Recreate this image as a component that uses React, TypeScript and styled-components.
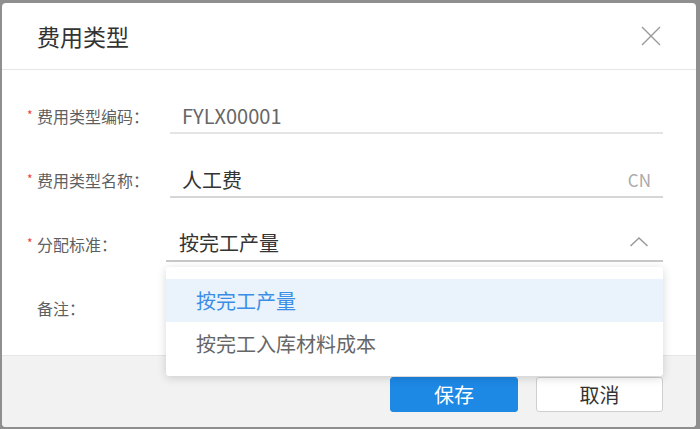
import React, { useState } from "react";
import styled, { createGlobalStyle } from "styled-components";

const GlobalStyle = createGlobalStyle`
  html, body {
    margin: 0;
    padding: 0;
    background: #8f8f8f;
    font-family: "Noto Sans CJK SC", "Noto Sans", sans-serif;
  }
`;

type Field = {
  label: string;
  required: boolean;
  value: string;
  disabled?: boolean;
  suffix?: string;
};

const fields: Field[] = [
  { label: "费用类型编码：", required: true, value: "FYLX00001", disabled: true },
  { label: "费用类型名称：", required: true, value: "人工费", suffix: "CN" },
];

const options = ["按完工产量", "按完工入库材料成本"];

const App = (): JSX.Element => {
  const [selected, setSelected] = useState(options[0]);

  return (
    <>
      <GlobalStyle />
      <Dialog>
        <Header>
          <Title>费用类型</Title>
          <CloseButton aria-label="关闭">
            <svg width="22" height="22" viewBox="0 0 22 22">
              <path d="M2 2 L20 20 M20 2 L2 20" stroke="#9a9a9a" strokeWidth="1.4" fill="none" />
            </svg>
          </CloseButton>
        </Header>
        <Body>
          {fields.map((f) => (
            <Row key={f.label}>
              <Label>
                <Star>{f.required ? "*" : ""}</Star>
                {f.label}
              </Label>
              <Input $disabled={f.disabled}>
                <Value $disabled={f.disabled}>{f.value}</Value>
                {f.suffix && <Suffix>{f.suffix}</Suffix>}
              </Input>
            </Row>
          ))}
          <Row>
            <Label>
              <Star>*</Star>
              分配标准：
            </Label>
            <SelectWrap>
              <Select>
                <SelectValue>{selected}</SelectValue>
                <svg width="20" height="12" viewBox="0 0 20 12">
                  <path d="M1.5 10 L10 2 L18.5 10" stroke="#9a9a9a" strokeWidth="1.5" fill="none" />
                </svg>
              </Select>
              <Menu>
                {options.map((o) => (
                  <MenuItem key={o} $active={o === selected} onClick={() => setSelected(o)}>
                    {o}
                  </MenuItem>
                ))}
              </Menu>
            </SelectWrap>
          </Row>
          <Row>
            <Label>
              <Star />
              备注：
            </Label>
            <Input />
          </Row>
        </Body>
        <Footer>
          <PrimaryButton>保存</PrimaryButton>
          <Button>取消</Button>
        </Footer>
      </Dialog>
    </>
  );
};

export default App;

const Dialog = styled.div`
  margin: 3px 4px 0 2px;
  height: 424px;
  background: #fff;
  border-radius: 4px;
  overflow: hidden;
  display: flex;
  flex-direction: column;
`;

const Header = styled.header`
  height: 67px;
  border-bottom: 1px solid #e6e6e6;
  display: flex;
  align-items: center;
  justify-content: space-between;
  padding: 0 34px 0 35px;
  box-sizing: border-box;
`;

const Title = styled.h1`
  margin: 0;
  font-size: 23px;
  font-weight: 400;
  color: #333;
  line-height: 1;
`;

const CloseButton = styled.button`
  border: none;
  background: none;
  padding: 0;
  display: flex;
  cursor: pointer;
`;

const Body = styled.main`
  flex: 1;
  padding: 20px 33px 0 25px;
  display: flex;
  flex-direction: column;
  gap: 20px;
`;

const Row = styled.div`
  display: flex;
  align-items: center;
  height: 44px;
`;

const Label = styled.label`
  width: 143px;
  flex-shrink: 0;
  display: flex;
  align-items: center;
  padding-top: 8px;
  font-size: 16px;
  color: #5f5f5f;
`;

const Star = styled.span`
  width: 10px;
  color: #f04134;
  font-size: 12px;
  align-self: flex-start;
  margin-top: 2px;
`;

const Input = styled.div<{ $disabled?: boolean }>`
  flex: 1;
  height: 44px;
  box-sizing: border-box;
  border-bottom: 2px solid ${(p) => (p.$disabled ? "#e4e4e4" : "#d6d6d6")};
  display: flex;
  align-items: center;
  justify-content: space-between;
  padding: 8px 12px 0;
`;

const Value = styled.span<{ $disabled?: boolean }>`
  font-size: 20px;
  color: ${(p) => (p.$disabled ? "#666" : "#333")};
`;

const Suffix = styled.span`
  font-size: 17px;
  color: #aaa;
`;

const SelectWrap = styled.div`
  flex: 1;
  position: relative;
  margin-left: -4px;
  height: 44px;
`;

const Select = styled.div`
  height: 44px;
  box-sizing: border-box;
  border-bottom: 2px solid #c8c8c8;
  display: flex;
  align-items: center;
  justify-content: space-between;
  padding: 6px 14px 0 13px;
  cursor: pointer;
`;

const SelectValue = styled.span`
  font-size: 20px;
  color: #333;
`;

const Menu = styled.ul`
  position: absolute;
  top: 49px;
  left: 0;
  right: 0;
  margin: 0;
  padding: 12px 0 11px;
  list-style: none;
  background: #fff;
  border-radius: 3px;
  box-shadow: 0 2px 10px rgba(0, 0, 0, 0.16);
  z-index: 10;
`;

const MenuItem = styled.li<{ $active?: boolean }>`
  height: 43px;
  display: flex;
  align-items: center;
  padding: 0 30px;
  font-size: 20px;
  color: ${(p) => (p.$active ? "#3a8ee6" : "#666")};
  background: ${(p) => (p.$active ? "#eaf2fc" : "#fff")};
  cursor: pointer;
`;

const Footer = styled.footer`
  height: 72px;
  background: #f2f2f2;
  border-top: 1px solid #e6e6e6;
  box-sizing: border-box;
  display: flex;
  justify-content: flex-end;
  align-items: flex-start;
  gap: 18px;
  padding: 21px 33px 0 0;
`;

const Button = styled.button`
  width: 127px;
  height: 35px;
  border: 1px solid #cfcfcf;
  border-radius: 3px;
  background: #fff;
  font-family: inherit;
  font-size: 20px;
  color: #333;
  cursor: pointer;
  line-height: 1;
`;

const PrimaryButton = styled(Button)`
  width: 128px;
  border-color: #1e88e5;
  background: #1e88e5;
  color: #fff;
`;
